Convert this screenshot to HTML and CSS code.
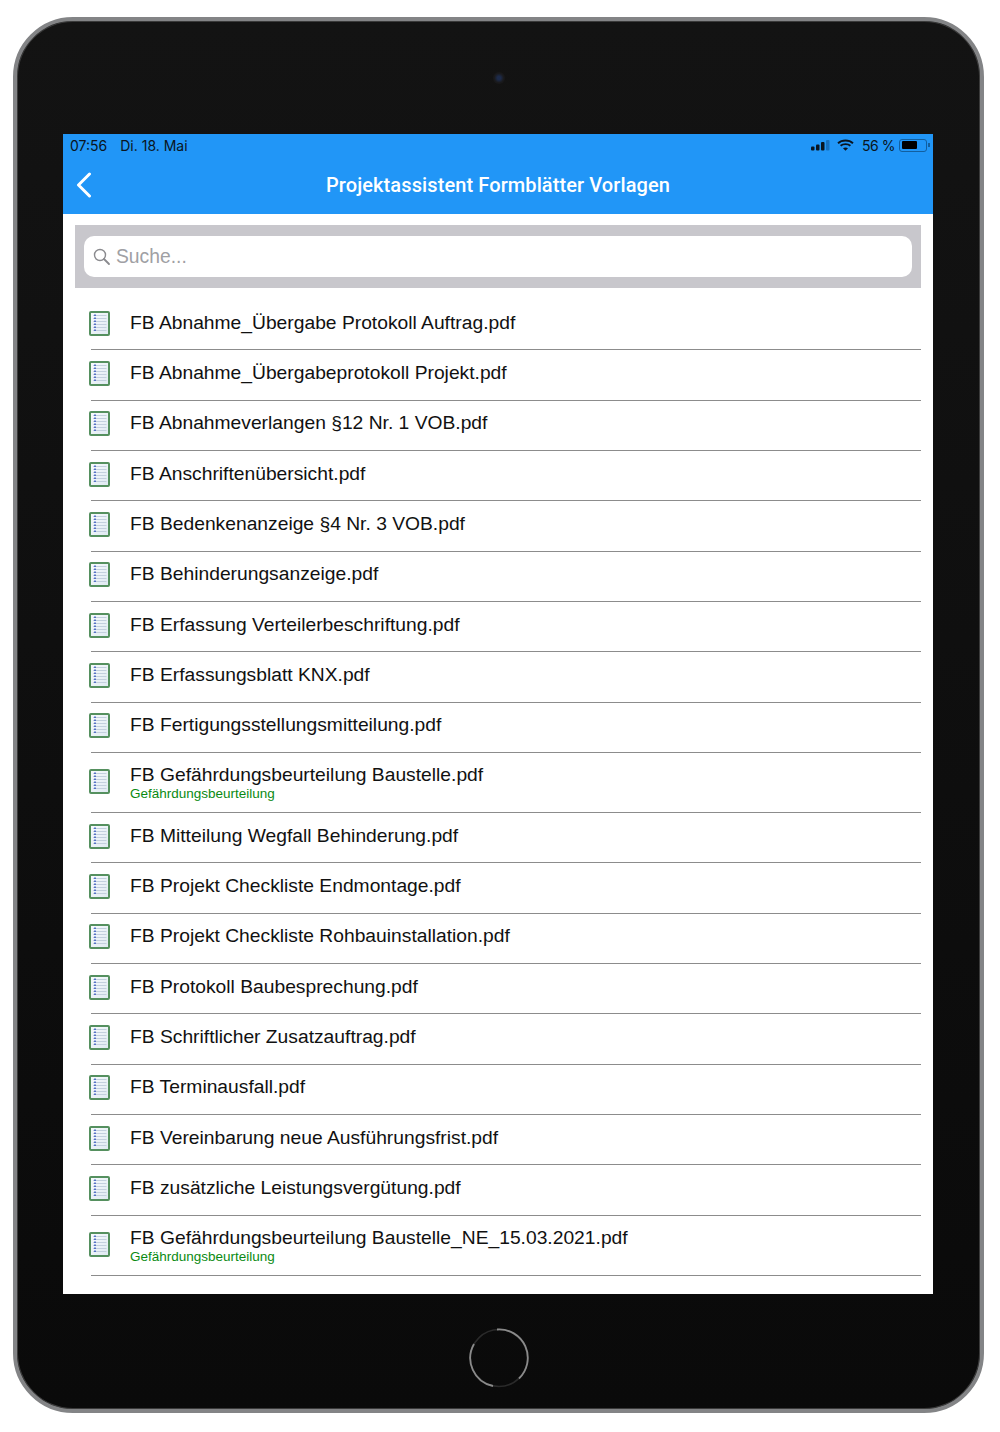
FILE: index.html
```html
<!DOCTYPE html>
<html lang="de">
<head>
<meta charset="UTF-8">
<meta name="viewport" content="width=device-width, initial-scale=1.0">
<title>Projektassistent Formblätter Vorlagen</title>
<link rel="stylesheet" href="styles.css">
</head>
<body>

<svg class="sprite" width="0" height="0">
    <defs>
        <linearGradient id="docFill" x1="0" y1="0" x2="1" y2="1">
            <stop offset="0" stop-color="#f8fbfd"/>
            <stop offset="1" stop-color="#dfe9f2"/>
        </linearGradient>
    </defs>
    <symbol id="doc" viewBox="0 0 21 25">
        <rect x="1" y="1" width="19" height="23" rx="1" fill="url(#docFill)" stroke="#55905f" stroke-width="2"/>
        <path d="M4 4.5H17.5M4 7.5H17.5M4 10.5H17.5M4 13.5H17.5M4 16.5H17.5M4 19.5H17.5" stroke="#c3d0de" stroke-width="1"/>
        <path d="M6 3.5V21.5" stroke="#4a68c4" stroke-width="1.8" stroke-dasharray="1.5 1.5"/>
    </symbol>
</svg>

<div class="device">
    <div class="camera"></div>

    <div class="screen">
        <header class="topbar">
            <div class="statusbar">
                <div class="status-left"><span>07:56</span><span>Di. 18. Mai</span></div>
                <div class="status-right">
                    <svg width="19" height="11" viewBox="0 0 19 11">
                        <rect x="0" y="6.5" width="3.5" height="4" rx="1" fill="#0a1520"/>
                        <rect x="5" y="4.5" width="3.5" height="6" rx="1" fill="#0a1520"/>
                        <rect x="10" y="2" width="3.5" height="8.5" rx="1" fill="#0a1520"/>
                        <rect x="15" y="0" width="3.5" height="10.5" rx="1" fill="#1670c0"/>
                    </svg>
                    <svg width="17" height="12" viewBox="0 0 17 12">
                        <path d="M1 4.2C5 .6 12 .6 16 4.2M3.6 6.8C6.2 4.5 10.8 4.5 13.4 6.8" fill="none" stroke="#0a1520" stroke-width="1.9"/>
                        <path d="M6 9.2C7.4 8.1 9.6 8.1 11 9.2L8.5 11.8Z" fill="#0a1520"/>
                    </svg>
                    <span class="battery-text">56 %</span>
                    <div class="battery"><div class="battery-level"></div></div>
                </div>
            </div>
            <div class="navbar">
                <svg class="back" width="16" height="26" viewBox="0 0 16 26">
                    <path d="M13.5 2L2.5 13L13.5 24" fill="none" stroke="#fff" stroke-width="3" stroke-linecap="round" stroke-linejoin="round"/>
                </svg>
                <h1>Projektassistent Formblätter Vorlagen</h1>
            </div>
        </header>

        <div class="searchbar">
            <div class="search-input">
                <svg width="18" height="18" viewBox="0 0 18 18">
                    <circle cx="7" cy="7" r="5.5" fill="none" stroke="#8a8a8e" stroke-width="1.4"/>
                    <path d="M11 11L16 16" stroke="#8a8a8e" stroke-width="1.8" stroke-linecap="round"/>
                </svg>
                <span>Suche...</span>
            </div>
        </div>

        <ul class="list">
            <li class="row"><svg class="doc"><use href="#doc"/></svg><div class="row-text"><div class="name">FB Abnahme_Übergabe Protokoll Auftrag.pdf</div></div></li>
            <li class="row"><svg class="doc"><use href="#doc"/></svg><div class="row-text"><div class="name">FB Abnahme_Übergabeprotokoll Projekt.pdf</div></div></li>
            <li class="row"><svg class="doc"><use href="#doc"/></svg><div class="row-text"><div class="name">FB Abnahmeverlangen §12 Nr. 1 VOB.pdf</div></div></li>
            <li class="row"><svg class="doc"><use href="#doc"/></svg><div class="row-text"><div class="name">FB Anschriftenübersicht.pdf</div></div></li>
            <li class="row"><svg class="doc"><use href="#doc"/></svg><div class="row-text"><div class="name">FB Bedenkenanzeige §4 Nr. 3 VOB.pdf</div></div></li>
            <li class="row"><svg class="doc"><use href="#doc"/></svg><div class="row-text"><div class="name">FB Behinderungsanzeige.pdf</div></div></li>
            <li class="row"><svg class="doc"><use href="#doc"/></svg><div class="row-text"><div class="name">FB Erfassung Verteilerbeschriftung.pdf</div></div></li>
            <li class="row"><svg class="doc"><use href="#doc"/></svg><div class="row-text"><div class="name">FB Erfassungsblatt KNX.pdf</div></div></li>
            <li class="row"><svg class="doc"><use href="#doc"/></svg><div class="row-text"><div class="name">FB Fertigungsstellungsmitteilung.pdf</div></div></li>
            <li class="row tall"><svg class="doc"><use href="#doc"/></svg><div class="row-text"><div class="name">FB Gefährdungsbeurteilung Baustelle.pdf</div><div class="tag">Gefährdungsbeurteilung</div></div></li>
            <li class="row"><svg class="doc"><use href="#doc"/></svg><div class="row-text"><div class="name">FB Mitteilung Wegfall Behinderung.pdf</div></div></li>
            <li class="row"><svg class="doc"><use href="#doc"/></svg><div class="row-text"><div class="name">FB Projekt Checkliste Endmontage.pdf</div></div></li>
            <li class="row"><svg class="doc"><use href="#doc"/></svg><div class="row-text"><div class="name">FB Projekt Checkliste Rohbauinstallation.pdf</div></div></li>
            <li class="row"><svg class="doc"><use href="#doc"/></svg><div class="row-text"><div class="name">FB Protokoll Baubesprechung.pdf</div></div></li>
            <li class="row"><svg class="doc"><use href="#doc"/></svg><div class="row-text"><div class="name">FB Schriftlicher Zusatzauftrag.pdf</div></div></li>
            <li class="row"><svg class="doc"><use href="#doc"/></svg><div class="row-text"><div class="name">FB Terminausfall.pdf</div></div></li>
            <li class="row"><svg class="doc"><use href="#doc"/></svg><div class="row-text"><div class="name">FB Vereinbarung neue Ausführungsfrist.pdf</div></div></li>
            <li class="row"><svg class="doc"><use href="#doc"/></svg><div class="row-text"><div class="name">FB zusätzliche Leistungsvergütung.pdf</div></div></li>
            <li class="row tall"><svg class="doc"><use href="#doc"/></svg><div class="row-text"><div class="name">FB Gefährdungsbeurteilung Baustelle_NE_15.03.2021.pdf</div><div class="tag">Gefährdungsbeurteilung</div></div></li>
        </ul>
    </div>

    <svg class="home" width="60" height="60" viewBox="0 0 60 60">
        <circle cx="30" cy="30" r="28.5" fill="none" stroke="#2a2a2a" stroke-width="1.5"/>
        <path d="M28 1.5A28.5 28.5 0 0 1 50 50.5" fill="none" stroke="#8a8a8a" stroke-width="1.8"/>
        <path d="M5 16A28.5 28.5 0 0 0 24 58" fill="none" stroke="#8a8a8a" stroke-width="1.8"/>
    </svg>
</div>

</body>
</html>
```

FILE: styles.css
```css
* {
    box-sizing: border-box;
}
body {
    margin: 0;
    background: #fff;
    font-family: "Liberation Sans", Arial, sans-serif;
}
.sprite {
    position: absolute;
}
.device {
    width: 971px;
    height: 1396px;
    margin: 17px 0 0 13px;
    padding: 0 46px;
    background: linear-gradient(#131313, #0a0a0a);
    border: 4px solid #838486;
    border-radius: 60px;
    box-shadow: inset 0 0 0 1px #3a3a3a;
    display: flex;
    flex-direction: column;
    align-items: flex-start;
}
.camera {
    width: 12px;
    height: 12px;
    margin: 51px 0 0;
    align-self: center;
    border-radius: 50%;
    background: radial-gradient(#1c2a4a 20%, #1a1a1c 55%, #131313);
}
.screen {
    width: 870px;
    height: 1160px;
    margin-top: 50px;
    background: #fff;
    overflow: hidden;
}
.topbar {
    height: 80px;
    background: #2196f7;
}
.statusbar {
    height: 22px;
    padding: 0 6px 0 7px;
    display: flex;
    justify-content: space-between;
    align-items: center;
    font-family: Inter, sans-serif;
    font-size: 14px;
    color: #0a1520;
}
.status-left {
    display: flex;
    gap: 13px;
}
.status-right {
    display: flex;
    align-items: center;
    gap: 7px;
}
.battery-text {
    margin: 0 -3px 0 1px;
    letter-spacing: -0.5px;
}
.battery {
    width: 28px;
    height: 13px;
    padding: 1.5px;
    border: 1px solid #125f9f;
    border-radius: 3px;
    position: relative;
}
.battery::after {
    content: "";
    position: absolute;
    right: -4px;
    top: 3px;
    width: 2px;
    height: 4px;
    background: #125f9f;
}
.battery-level {
    width: 15px;
    height: 100%;
    background: #000;
    border-radius: 1px;
}
.navbar {
    height: 58px;
    position: relative;
    display: flex;
    align-items: center;
    justify-content: center;
}
.back {
    position: absolute;
    left: 13px;
    top: 16px;
}
.navbar h1 {
    margin: 0;
    font-family: Roboto, sans-serif;
    font-size: 20px;
    font-weight: 500;
    letter-spacing: 0.1px;
    color: #fff;
}
.searchbar {
    height: 63px;
    margin: 11px 12px 0;
    padding: 11px 9px;
    background: #c8c7cc;
}
.search-input {
    height: 41px;
    padding-left: 9px;
    display: flex;
    align-items: center;
    gap: 5px;
    background: #fff;
    border-radius: 10px;
    font-size: 19.3px;
    color: #a0a0a4;
}
.list {
    list-style: none;
    margin: 12px 12px 0 0;
    padding: 0;
}
.row {
    height: 50.33px;
    margin-left: 28px;
    padding-bottom: 3px;
    display: flex;
    align-items: center;
    border-bottom: 1px solid #8c8c8c;
}
.row.tall {
    height: 60px;
    padding-bottom: 0;
}
.doc {
    width: 21px;
    height: 25px;
    margin: 0 20px 0 -2px;
    flex: none;
}
.row-text {
    margin-top: -1px;
    line-height: 22px;
}
.tall .row-text {
    margin-top: 1px;
}
.tall .doc {
    margin-bottom: 1px;
}
.name {
    font-size: 19.25px;
    color: #111;
}
.tag {
    font-size: 13.5px;
    line-height: 15px;
    color: #0a8a12;
}
.home {
    margin-top: 34px;
    align-self: center;
}
```
